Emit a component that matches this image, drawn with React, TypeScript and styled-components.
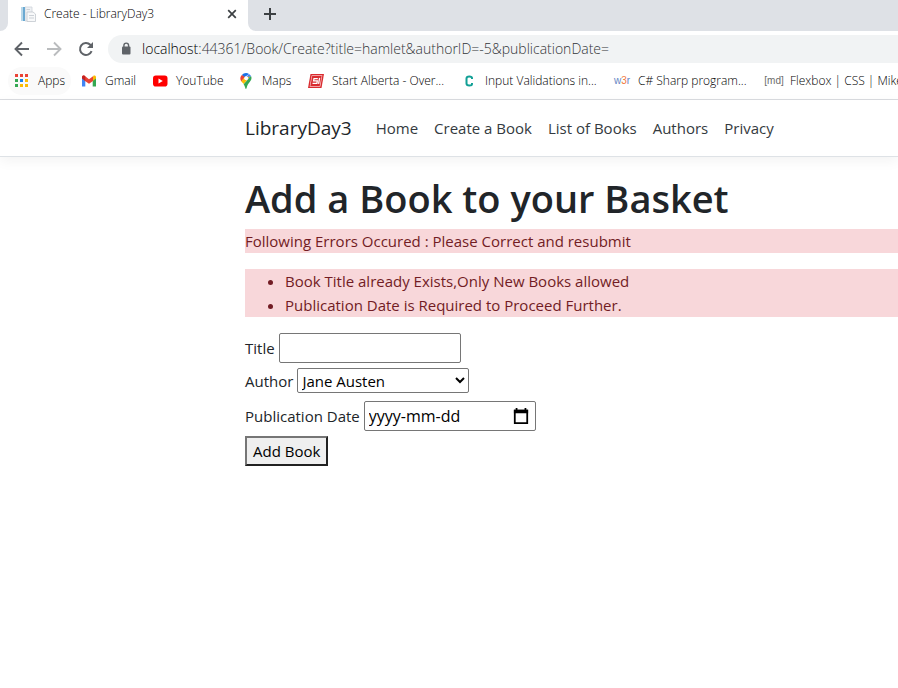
import React, { useState } from "react";
import styled, { createGlobalStyle } from "styled-components";

const GlobalStyle = createGlobalStyle`
  *, *::before, *::after { box-sizing: border-box; }
  body {
    margin: 0;
    background: #fff;
    color: #212529;
    font-family: "Open Sans", "Noto Sans", sans-serif;
    font-size: 15px;
    line-height: 24px;
    overflow-x: hidden;
  }
  button, input, select { font: inherit; color: #000; }
`;

/* ---------- Browser chrome ---------- */

const TabStrip = styled.div`
  display: flex;
  height: 31px;
  background: #fff;
`;

const StripEdge = styled.div`
  width: 8px;
  background: #dee1e6;
  border-bottom-right-radius: 8px;
`;

const Tab = styled.div`
  display: flex;
  align-items: center;
  width: 240px;
  padding: 0 8px 3px 12px;
  font-size: 12px;
  font-weight: 300;
  color: #000;
`;

const TabTitle = styled.span`
  flex: 1;
  margin-left: 8px;
  white-space: nowrap;
`;

const StripRest = styled.div`
  display: flex;
  flex: 1;
  align-items: center;
  padding: 0 14px 3px;
  background: #dee1e6;
  border-bottom-left-radius: 8px;
`;

const IconButton = styled.button`
  display: flex;
  align-items: center;
  justify-content: center;
  width: 16px;
  height: 16px;
  padding: 0;
  border: 0;
  background: none;
  flex: none;
`;

const Toolbar = styled.div`
  display: flex;
  align-items: center;
  gap: 16px;
  padding: 4px 0 0 14px;
  background: #fff;
`;

const AddressBar = styled.div`
  display: flex;
  flex: 1;
  align-items: center;
  height: 28px;
  margin-left: -2px;
  padding-left: 10px;
  gap: 8px;
  background: #f1f3f4;
  border-radius: 14px 0 0 14px;
  font-size: 14px;
  font-weight: 300;
  white-space: nowrap;
  color: #333639;
`;

const Url = styled.span`
  b { font-weight: inherit; color: #000; }
`;

const Bookmarks = styled.nav`
  display: flex;
  align-items: center;
  height: 37px;
  padding-left: 8px;
  overflow: hidden;
  border-bottom: 1px solid #dadce0;
`;

const Bookmark = styled.a<{ $width: number; $active?: boolean }>`
  display: flex;
  flex: none;
  align-items: center;
  gap: 8px;
  width: ${(p) => p.$width}px;
  height: 28px;
  margin-right: 4px;
  padding-left: 6px;
  border-radius: 14px;
  background: ${(p) => (p.$active ? "#fafafa" : "transparent")};
  font-size: 12px;
  font-weight: 300;
  color: #000;
  text-decoration: none;
  white-space: nowrap;
  svg { flex: none; }
`;

/* ---------- Page ---------- */

const SiteHeader = styled.header`
  display: flex;
  align-items: center;
  gap: 24px;
  height: 57px;
  padding-left: 245px;
  border-bottom: 1px solid #dee2e6;
  box-shadow: 0 4px 12px rgba(0, 0, 0, 0.05);
`;

const Brand = styled.a`
  font-size: 19px;
  color: #212529;
  text-decoration: none;
`;

const SiteNav = styled.nav`
  display: flex;
  gap: 16px;
`;

const NavLink = styled.a`
  color: #343a40;
  text-decoration: none;
  white-space: nowrap;
`;

const Main = styled.main`
  padding: 17px 0 16px 245px;
`;

const Heading = styled.h1`
  margin: 0 0 7px;
  font-size: 38px;
  line-height: 48px;
  font-weight: 600;
  white-space: nowrap;
`;

const ErrorText = styled.p`
  margin: 0 0 16px;
  background: #f8d7da;
  color: #721c24;
`;

const ErrorList = styled.ul`
  margin: 0 0 16px;
  padding-left: 40px;
  background: #f8d7da;
  color: #721c24;
`;

const Field = styled.div<{ $gap: number }>`
  display: flex;
  align-items: center;
  gap: 4px;
  margin-bottom: ${(p) => p.$gap}px;
`;

const TextInput = styled.input`
  width: 182px;
  height: 30px;
  padding: 1px 3px;
  border: 1px solid #767676;
  border-radius: 2px;
`;

const Select = styled.select`
  width: 172px;
  height: 25px;
  padding: 0;
  border: 1px solid #767676;
  border-radius: 2px;
  background: #fff;
`;

const DateBox = styled.div`
  display: flex;
  align-items: center;
  width: 172px;
  height: 30px;
  padding: 0 6px 0 4px;
  border: 1px solid #767676;
  border-radius: 2px;
`;

const DateInput = styled.input`
  flex: 1;
  min-width: 0;
  padding: 0;
  border: 0;
  outline: 0;
  background: none;
  font-size: 16px;
  &::placeholder { color: #000; opacity: 1; }
`;

const SubmitButton = styled.button`
  height: 30px;
  padding: 0 6px;
  border: 2px solid;
  border-color: #767676 #212121 #212121 #767676;
  border-radius: 0;
  background: #efefef;
`;

/* ---------- Icons ---------- */

const PageIcon = () => (
  <svg width="16" height="16" viewBox="0 0 16 16">
    <path d="M5 1h7v14H5z" fill="#eef1f4" stroke="#cfd4da" strokeWidth=".8" />
    <path d="M1 1h4v14H1z" fill="#b9d8ea" />
    <path d="M3 1h2v14H3z" fill="#6aa9d2" />
    <path d="M7 6h6l2.5 2v7.5H7z" fill="#f8f9fa" stroke="#c3c8ce" strokeWidth=".8" />
    <path d="M6.5 3.5H10M9 9.5h5M9 12h5" stroke="#ccd1d7" strokeWidth="1" />
  </svg>
);

const CloseIcon = () => (
  <svg width="16" height="16" viewBox="0 0 16 16" fill="none" stroke="#3c4043" strokeWidth="1.7">
    <path d="M4.2 4.2l7.6 7.6M11.8 4.2l-7.6 7.6" />
  </svg>
);

const PlusIcon = () => (
  <svg width="16" height="16" viewBox="0 0 16 16" fill="none" stroke="#3c4043" strokeWidth="2">
    <path d="M8 2v12M2 8h12" />
  </svg>
);

const ArrowIcon = ({ forward = false }: { forward?: boolean }) => (
  <svg width="16" height="16" viewBox="0 0 16 16" fill="none" stroke={forward ? "#babcbe" : "#5f6368"} strokeWidth="1.9">
    {forward ? <path d="M1 8h13M8 1.5L14.5 8 8 14.5" /> : <path d="M15 8H2M8 1.5L1.5 8 8 14.5" />}
  </svg>
);

const ReloadIcon = () => (
  <svg width="16" height="16" viewBox="0 0 16 16">
    <path d="M13.6 10.2A6 6 0 1 1 12.3 3.8L14 5.5" fill="none" stroke="#5f6368" strokeWidth="2" />
    <path d="M15 1v6H9z" fill="#5f6368" />
  </svg>
);

const LockIcon = () => (
  <svg width="16" height="16" viewBox="0 0 16 16">
    <rect x="4" y="5.5" width="8.5" height="8" rx="1" fill="#5f6368" />
    <path d="M5.9 6V4.5a2.35 2.35 0 0 1 4.7 0V6" fill="none" stroke="#5f6368" strokeWidth="1.4" />
  </svg>
);

const appColors = ["#ea4335", "#ea4335", "#ea4335", "#34a853", "#1a82e8", "#fbbc04", "#34a853", "#fbbc04", "#fbbc04"];

const AppsIcon = () => (
  <svg width="16" height="16" viewBox="0 0 16 16">
    {appColors.map((c, i) => (
      <rect key={i} x={1 + (i % 3) * 5} y={1 + Math.floor(i / 3) * 5} width="3" height="3" fill={c} />
    ))}
  </svg>
);

const GmailIcon = () => (
  <svg width="16" height="16" viewBox="0 0 16 16">
    <path d="M1 4v9.5h3.3V7z" fill="#4285f4" />
    <path d="M15 4v9.5h-3.3V7z" fill="#34a853" />
    <path d="M11.7 4.2V8L15 5.5V4c0-1.6-1.8-2-2.6-1.2z" fill="#fbbc04" />
    <path d="M1 4c0-1.6 1.8-2 2.6-1.2L8 6.3l4-3.1V8L8 10.8 4 8z" fill="#ea4335" />
    <path d="M1 4c0-1.6 1.8-2 2.6-1.2l.7.6V8L1 5.5z" fill="#c5221f" />
  </svg>
);

const YouTubeIcon = () => (
  <svg width="16" height="16" viewBox="0 0 16 16">
    <rect x="1" y="2.6" width="14.5" height="11" rx="2.8" fill="#f00" />
    <path d="M6.5 5.6v5L10.8 8z" fill="#fff" />
  </svg>
);

const MapsIcon = () => (
  <svg width="16" height="16" viewBox="0 0 16 16">
    <path d="M8 0a5.6 5.6 0 0 0-4.2 2L6.3 4.5 11 .9A5.4 5.4 0 0 0 8 0z" fill="#1a73e8" />
    <path d="M3.8 2A5.3 5.3 0 0 0 3.3 8.4L7 4z" fill="#ea4335" />
    <path d="M11 .9L6.3 6 10 7.6l3-4.5A5 5 0 0 0 11 .9z" fill="#4285f4" />
    <path d="M3.3 8.4L5.8 11 12 3.5 6.3 4.5z" fill="#fbbc04" />
    <path d="M13 3.1L5.6 11.2C7 13 7.3 16 8 16s.8-3 2.4-5.2C12.6 8 14.4 6.2 13 3.1z" fill="#34a853" />
    <circle cx="8.2" cy="5.3" r="2" fill="#fff" />
  </svg>
);

const StartAlbertaIcon = () => (
  <svg width="16" height="16" viewBox="0 0 16 16">
    <path d="M2.5 1H16l-2.500 14H0z" fill="#d92b2f" />
    <path d="M3.700 2.300h10.700l-2.100 11.400H1.600z" fill="#f7c9ca" />
    <path d="M4.200 3h9.400l-1.900 10H2.400z" fill="#d92b2f" />
    <path d="M9.800 5.600H6L5.600 7.800h3.700l-.4 2.600H4.500M11.600 4.800l-1 6" fill="none" stroke="#fff" strokeWidth="1.3" />
  </svg>
);

const CIcon = () => (
  <svg width="16" height="16" viewBox="0 0 16 16">
    <path d="M11 6V5C11 3.800 10 3.500 8.300 3.500S5.500 4 5.500 5.400v5.200c0 1.400 1 1.900 2.800 1.900S11 12 11 11V10" fill="none" stroke="#12a096" strokeWidth="2" />
  </svg>
);

const IconText = styled.span<{ $color: string; $size: number }>`
  display: flex;
  flex: none;
  justify-content: center;
  width: 16px;
  font-size: ${(p) => p.$size}px;
  font-family: "Liberation Sans", sans-serif;
  font-weight: 400;
  color: ${(p) => p.$color};
  i { font-style: normal; color: #f27a3d; }
`;

const CalendarIcon = () => (
  <svg width="18" height="20" viewBox="0 0 18 20">
    <path d="M2 4h14v14H2z" fill="none" stroke="#000" strokeWidth="2" />
    <path d="M1 3h16v4H1zM3 1h2v3H3zM13 1h2v3h-2z" fill="#000" />
  </svg>
);

const bookmarks = [
  { label: "Apps", width: 63, icon: <AppsIcon /> },
  { label: "Gmail", width: 67, icon: <GmailIcon /> },
  { label: "YouTube", width: 82, icon: <YouTubeIcon /> },
  { label: "Maps", width: 66, icon: <MapsIcon /> },
  { label: "Start Alberta - Over...", width: 149, icon: <StartAlbertaIcon /> },
  { label: "Input Validations in...", width: 149, icon: <CIcon /> },
  { label: "C# Sharp program...", width: 148, icon: <IconText $color="#6484c4" $size={10}>w<i>3</i>r</IconText> },
  { label: "Flexbox | CSS | Mike", width: 150, icon: <IconText $color="#6b6b6b" $size={10}>[md]</IconText> },
];

const navLinks = ["Home", "Create a Book", "List of Books", "Authors", "Privacy"];

export default function App() {
  const [title, setTitle] = useState("");
  const [date, setDate] = useState("");

  return (
    <>
      <GlobalStyle />
      <TabStrip>
        <StripEdge />
        <Tab>
          <PageIcon />
          <TabTitle>Create - LibraryDay3</TabTitle>
          <IconButton aria-label="Close tab"><CloseIcon /></IconButton>
        </Tab>
        <StripRest>
          <IconButton aria-label="New tab"><PlusIcon /></IconButton>
        </StripRest>
      </TabStrip>
      <Toolbar>
        <IconButton aria-label="Back"><ArrowIcon /></IconButton>
        <IconButton aria-label="Forward"><ArrowIcon forward /></IconButton>
        <IconButton aria-label="Reload"><ReloadIcon /></IconButton>
        <AddressBar>
          <LockIcon />
          <Url><b>localhost</b>:44361/Book/Create?title=hamlet&amp;authorID=-5&amp;publicationDate=</Url>
        </AddressBar>
      </Toolbar>
      <Bookmarks aria-label="Bookmarks">
        {bookmarks.map((b, i) => (
          <Bookmark key={b.label} href="#" $width={b.width} $active={i === 0}>
            {b.icon}
            {b.label}
          </Bookmark>
        ))}
      </Bookmarks>

      <SiteHeader>
        <Brand href="#">LibraryDay3</Brand>
        <SiteNav>
          {navLinks.map((l) => (
            <NavLink key={l} href="#">{l}</NavLink>
          ))}
        </SiteNav>
      </SiteHeader>
      <Main>
        <Heading>Add a Book to your Basket</Heading>
        <ErrorText>Following Errors Occured : Please Correct and resubmit</ErrorText>
        <ErrorList>
          <li>Book Title already Exists,Only New Books allowed</li>
          <li>Publication Date is Required to Proceed Further.</li>
        </ErrorList>
        <form onSubmit={(e) => e.preventDefault()}>
          <Field $gap={5}>
            <label htmlFor="title">Title</label>
            <TextInput id="title" value={title} onChange={(e) => setTitle(e.target.value)} />
          </Field>
          <Field $gap={8}>
            <label htmlFor="author">Author</label>
            <Select id="author" defaultValue="austen">
              <option value="austen">Jane Austen</option>
            </Select>
          </Field>
          <Field $gap={5}>
            <label htmlFor="date">Publication Date</label>
            <DateBox>
              <DateInput id="date" placeholder="yyyy-mm-dd" value={date} onChange={(e) => setDate(e.target.value)} />
              <IconButton type="button" aria-label="Open calendar"><CalendarIcon /></IconButton>
            </DateBox>
          </Field>
          <SubmitButton type="submit">Add Book</SubmitButton>
        </form>
      </Main>
    </>
  );
}
